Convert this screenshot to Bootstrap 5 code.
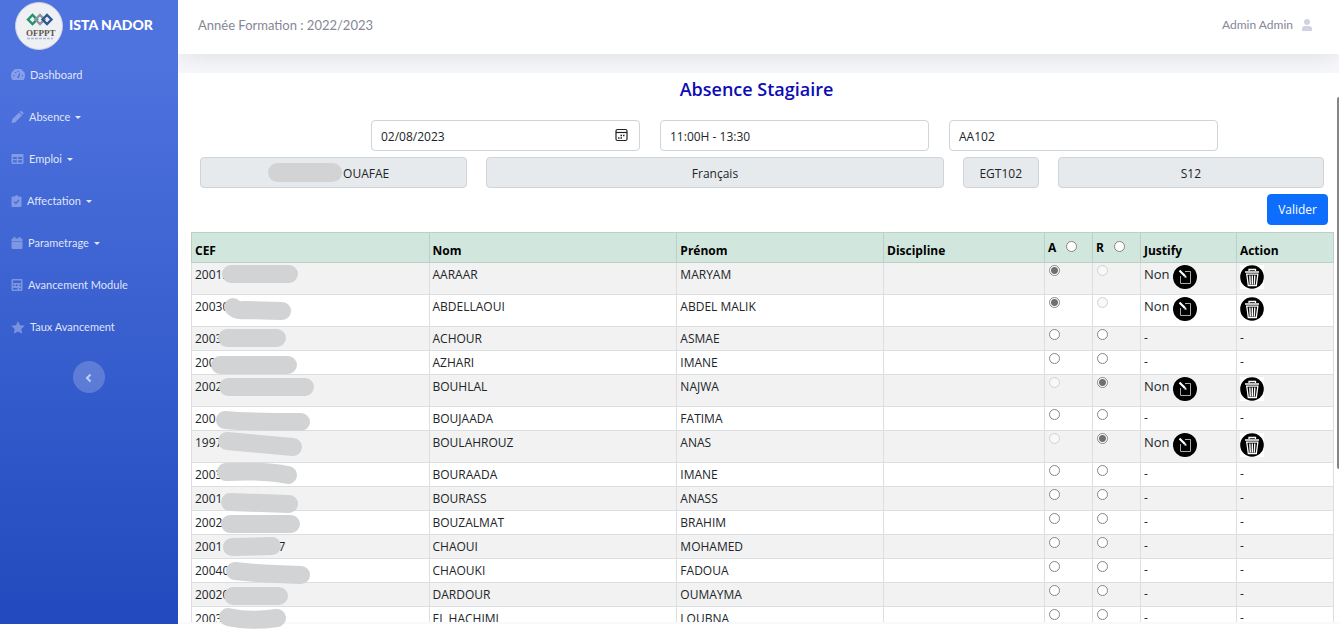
<!DOCTYPE html>
<html lang="fr">
<head>
<meta charset="utf-8">
<meta name="viewport" content="width=device-width, initial-scale=1">
<title>Absence Stagiaire</title>
<link href="https://cdn.jsdelivr.net/npm/bootstrap@5.3.0/dist/css/bootstrap.min.css" rel="stylesheet">
<style>
  body { min-height: 100vh; font-family: "Open Sans", sans-serif; font-size: 12px; line-height: 18px; color: #212529; background: #fff; overflow: hidden; }
  .app { height: calc(100vh - 6px); background: #f8f9fc; }
  .side { width: 178px; position: relative; z-index: 2; background: linear-gradient(180deg, #4e73df 10%, #224abe 100%); font-family: Lato, sans-serif; }
  .brand { height: 54px; padding: 0 0 2px 15px; gap: 6px; color: #fff; font-weight: 900; font-size: 14px; text-decoration: none; }
  .brand span { padding-bottom: 3px; }
  .side-item { height: 42px; padding-left: 11px; gap: 5px; color: rgba(255,255,255,.85); font-size: 11px; text-decoration: none; }
  .side-item svg { fill: rgba(255,255,255,.32); }
  .side-item.dropdown-toggle::after { margin-left: 0; border-width: 3px 3px 0; }
  .toggler { width: 32px; height: 32px; margin-top: 13px; background: rgba(255,255,255,.2); border: 0; }
  .topbar { height: 54px; padding: 0 27px 4px 20px; background: #fff; color: #858796; font-family: Lato, sans-serif; font-size: 13px; box-shadow: 0 2px 28px rgba(58,59,69,.15); }
  .topbar a { color: #858796; font-size: 12px; text-decoration: none; gap: 9px; }
  .panel { margin-top: 19px; margin-bottom: 2px; padding: 5px 5px 0 13px; background: #fff; min-height: 0; }
  .panel h1 { font-size: 18px; line-height: 22px; font-weight: 600; color: #0c0cb4; margin: 0 12px 20px 0; }
  .filters { display: grid; grid-template-columns: 160fr repeat(3, 269fr) 96fr; gap: 20px; margin-bottom: 6px; }
  .filters > :first-child { grid-column: 2; }
  .infos { display: grid; grid-template-columns: 267fr 457fr 76fr 266fr; gap: 19px; margin: 0 10px 6px 9px; }
  .form-control { height: 31px; padding: 6px 9px 4px; font-size: 12px; line-height: 18px; color: #212529; border-color: #ced4da; border-radius: 4px; }
  .form-control:disabled { background: #e7eaed; text-align: center; padding: 6px 0 4px; opacity: 1; }
  .masked:disabled { padding-left: 65px; }
  .mask { left: 68px; top: 6px; width: 74px; height: 19px; border-radius: 10px; background: #d1d3d5; }
  .cal { right: 12px; top: 8px; }
  .send { height: 31px; margin: 0 6px 7px 0; padding: 1px 10px 0; font-size: 12px; border-radius: 4px; }
  .list { table-layout: fixed; margin: 0; border-color: #dcdfe2; color: #212529; }
  .list > :not(caption) > * > * { padding: 3px 0 2px 3px; line-height: 18px; }
  .list > tbody > tr { height: 24px; }
  .list > tbody > tr.tall { height: 32px; }
  .list > thead th { height: 30px; vertical-align: bottom; font-weight: 700; color: #000; padding-bottom: 2px; }
  .list > thead th.pick { vertical-align: top; padding-top: 6px; }
  .list > tbody > tr > td { vertical-align: top; }
  .list > tbody > tr > td:nth-child(n+5) { padding-top: 2px; }
  .list input { appearance: none; display: block; width: 11px; height: 11px; margin: 0; border: 1px solid #858585; border-radius: 50%; background: #fff; }
  .list td input { margin-left: 1px; }
  .list th input { display: inline-block; margin-left: 7px; vertical-align: 0; }
  .list input:disabled { border-color: #d2d2d2; background: #f8f8f8; }
  .list input:checked { border-color: #8a8a8a; background: radial-gradient(circle, #707070 0 3px, #fff 4px); }
  .w-cef { width: 20.8%; } .w-nom { width: 21.7%; } .w-pre { width: 18.1%; } .w-dis { width: 14.1%; } .w-rad { width: 4.2%; } .w-jus { width: 8.4%; }
  .ico { border: 0; padding: 0; background: none; display: block; width: 24px; height: 24px; }
  .ico svg { display: block; }
  .just { gap: 3px; line-height: 18px; font-size: 13px; }
  .marks { left: 0; top: 0; pointer-events: none; overflow: visible; }
  .thumb { right: 0; top: 97px; width: 2px; height: 59vh; background: #858585; border-radius: 2px 0 0 2px; }
  .min0 { min-height: 0; min-width: 0; }
</style>
</head>
<body>
<svg width="0" height="0" class="position-absolute">
  <symbol id="edit" viewBox="0 0 24 24"><circle cx="12" cy="12" r="12"/><path d="M12 6.500H17.500V18.500H7.500V11" fill="none" stroke="#aaa" stroke-width="1"/><path d="M6.500 5.500L12 11" stroke="#fff" stroke-width="2.200"/><path d="M11 12.200L13.600 12.800L13 10.200Z" fill="#fff"/></symbol>
  <symbol id="bin" viewBox="0 0 24 24"><path fill="#fff" d="M0 0h24v24H0z"/><circle cx="12" cy="12" r="11.800"/><path d="M9 6V4.500h6.500V6M5 7h14M6 9.200h12.500M6.800 9.500l1.500 11h8l1.500-11" fill="none" stroke="#fff" stroke-width="1.300"/><path d="M9.800 10.500l.5 9M12.300 10.500v9M14.800 10.500l-.5 9" stroke="#fff" stroke-width="1.400"/></symbol>
</svg>
<div class="app d-flex">
  <nav class="side flex-shrink-0 d-flex flex-column">
    <a class="brand d-flex align-items-center" href="#">
      <svg width="48" height="48" viewBox="0 0 48 48" aria-hidden="true"><circle cx="24" cy="24" r="23.500" fill="#eef0f3" stroke="#c8cede"/>
        <g fill="none" stroke-width="2.400"><path d="M13 17.500l4.500-4.500 4.500 4.500-4.500 4.500z" stroke="#1f9468"/><path d="M20.500 17.500L25 13l4.500 4.500L25 22z" stroke="#8c96a0"/><path d="M27.500 17.500L32 13l4.500 4.500L32 22z" stroke="#2f5796"/></g>
        <text x="11" y="34" font-family="Liberation Serif, serif" font-weight="700" font-size="9" fill="#5c5450">OFPPT</text><path d="M12 36.500h26" stroke="#a9b9d4" stroke-width="1.500" stroke-dasharray="3 1"/></svg>
      <span>ISTA NADOR</span></a>
    <a class="side-item d-flex align-items-center" href="#"><svg width="14" height="12" viewBox="0 0 14 12"><path fill-rule="evenodd" d="M1.500 11A7 7 0 1 1 12.500 11zM6 9h2l1.200-5-.8-.3zM2 6h1.300v1.300H2zM4 3h1.300v1.300H4zM6.300 1.800h1.300v1.300H6.300zM10.700 6H12v1.300h-1.300z"/></svg><span>Dashboard</span></a>
    <a class="side-item dropdown-toggle d-flex align-items-center" href="#"><svg width="13" height="12" viewBox="0 0 12 12"><path d="M0 12l.8-3.800L7.500 1.500l3 3L3.800 11.200zM8.200.8L9 .2q.7-.5 1.300.1l1.400 1.400q.6.700 0 1.300l-.8.800z"/></svg><span>Absence</span></a>
    <a class="side-item dropdown-toggle d-flex align-items-center" href="#"><svg width="13" height="12" viewBox="0 0 12 12"><path fill-rule="evenodd" d="M1 1h10q1 0 1 1v8q0 1-1 1H1q-1 0-1-1V2q0-1 1-1zM1.500 4v2h3.800V4zM6.700 4v2h3.800V4zM1.500 7.300v2.200h3.800V7.300zM6.700 7.300v2.200h3.800V7.300z"/></svg><span>Emploi</span></a>
    <a class="side-item dropdown-toggle d-flex align-items-center" href="#"><svg width="11" height="12" viewBox="0 0 10 12"><path fill-rule="evenodd" d="M1 1.500h2.500a1.500 1.500 0 0 1 3 0H9q1 0 1 1V11q0 1-1 1H1q-1 0-1-1V2.500q0-1 1-1zM2.300 7l2 2.200L8 5.500l-.9-.9L4.300 7.400 3.200 6.200z"/></svg><span>Affectation</span></a>
    <a class="side-item dropdown-toggle d-flex align-items-center" href="#"><svg width="12" height="12" viewBox="0 0 11 12"><path d="M2 0h2v1.500h3V0h2v1.500h1q1 0 1 1V4H0V2.500q0-1 1-1h1zM0 4.500h11V11q0 1-1 1H1q-1 0-1-1z"/></svg><span>Parametrage</span></a>
    <a class="side-item d-flex align-items-center" href="#"><svg width="12" height="12" viewBox="0 0 11 12"><path fill-rule="evenodd" d="M1 0h9q1 0 1 1v10q0 1-1 1H1q-1 0-1-1V1q0-1 1-1zM1.500 1.500V4h8V1.500zM1.500 5.500V7H3V5.500zM4.500 5.500V7H6V5.500zM8 5.500V7h1.500V5.500zM1.500 9v1.500H6V9zM8 9v1.500h1.500V9z"/></svg><span>Avancement Module</span></a>
    <a class="side-item d-flex align-items-center" href="#"><svg width="14" height="13" viewBox="0 0 14 13"><path d="M7 0l2 4.200 4.700.6-3.400 3.300.9 4.700L7 10.600l-4.200 2.200.9-4.700L.3 4.800 5 4.200z"/></svg><span>Taux Avancement</span></a>
    <button class="toggler rounded-circle mx-auto p-0" type="button" aria-label="Réduire le menu"><svg width="8" height="10" viewBox="0 0 8 10"><path d="M5.500 1.500L2 5l3.500 3.500" fill="none" stroke="#c3cef2" stroke-width="2"/></svg></button>
  </nav>
  <div class="flex-grow-1 d-flex flex-column position-relative min0">
    <header class="topbar flex-shrink-0 d-flex justify-content-between align-items-center">
      <span>Année Formation : 2022/2023</span>
      <a class="d-flex align-items-center" href="#"><span>Admin Admin</span><svg width="10" height="12" viewBox="0 0 10 12" fill="#d1d3e2"><circle cx="5" cy="3" r="3"/><path d="M0 12v-2q0-3 3-3h4q3 0 3 3v2z"/></svg></a>
    </header>
    <main class="panel flex-grow-1 d-flex flex-column">
      <h1 class="text-center">Absence Stagiaire</h1>
      <div class="filters">
        <div class="position-relative"><input class="form-control" type="text" value="02/08/2023" aria-label="Date"><svg class="cal position-absolute" width="13" height="14" viewBox="0 0 13 14"><rect x="1" y="1.500" width="11" height="11" rx="1.500" fill="none" stroke="#222" stroke-width="1.200"/><path d="M1 4.500h11" stroke="#222" stroke-width="1.200"/><path d="M5.500 7.500h5M3 10h5" stroke="#222" stroke-width="1.500" stroke-dasharray="1.500 1"/></svg></div>
        <select class="form-control" aria-label="Séance"><option>11:00H - 13:30</option></select>
        <select class="form-control" aria-label="Groupe"><option>AA102</option></select>
      </div>
      <div class="infos">
        <div class="position-relative"><input class="form-control masked" disabled value="OUAFAE" aria-label="Formateur"><span class="mask position-absolute"></span></div>
        <input class="form-control" disabled value="Français" aria-label="Module">
        <input class="form-control" disabled value="EGT102" aria-label="Code">
        <input class="form-control" disabled value="S12" aria-label="Salle">
      </div>
      <button class="send btn btn-primary align-self-end flex-shrink-0" type="button">Valider</button>
      <div class="position-relative flex-grow-1 min0">
        <div class="h-100 overflow-hidden">
        <table class="list table table-bordered table-striped">
          <thead class="table-success"><tr><th class="w-cef">CEF</th><th class="w-nom">Nom</th><th class="w-pre">Prénom</th><th class="w-dis">Discipline</th><th class="w-rad pick"><label>A <input type="radio" name="all"></label></th><th class="w-rad pick"><label>R <input type="radio" name="all"></label></th><th class="w-jus">Justify</th><th>Action</th></tr></thead>
          <tbody>
            <tr class="tall"><td>20013</td><td>AARAAR</td><td>MARYAM</td><td></td><td><input type="radio" name="r1" aria-label="Absent" checked disabled></td><td><input type="radio" name="r1" aria-label="Retard" disabled></td><td><div class="just d-flex"><span>Non</span><button class="ico" type="button" aria-label="Justifier"><svg width="24" height="24"><use href="#edit"/></svg></button></div></td><td><button class="ico" type="button" aria-label="Supprimer"><svg width="24" height="24"><use href="#bin"/></svg></button></td></tr>
            <tr class="tall"><td>20030</td><td>ABDELLAOUI</td><td>ABDEL MALIK</td><td></td><td><input type="radio" name="r2" aria-label="Absent" checked disabled></td><td><input type="radio" name="r2" aria-label="Retard" disabled></td><td><div class="just d-flex"><span>Non</span><button class="ico" type="button" aria-label="Justifier"><svg width="24" height="24"><use href="#edit"/></svg></button></div></td><td><button class="ico" type="button" aria-label="Supprimer"><svg width="24" height="24"><use href="#bin"/></svg></button></td></tr>
            <tr><td>2003</td><td>ACHOUR</td><td>ASMAE</td><td></td><td><input type="radio" name="r3" aria-label="Absent"></td><td><input type="radio" name="r3" aria-label="Retard"></td><td>-</td><td>-</td></tr>
            <tr><td>200</td><td>AZHARI</td><td>IMANE</td><td></td><td><input type="radio" name="r4" aria-label="Absent"></td><td><input type="radio" name="r4" aria-label="Retard"></td><td>-</td><td>-</td></tr>
            <tr class="tall"><td>2002</td><td>BOUHLAL</td><td>NAJWA</td><td></td><td><input type="radio" name="r5" aria-label="Absent" disabled></td><td><input type="radio" name="r5" aria-label="Retard" checked disabled></td><td><div class="just d-flex"><span>Non</span><button class="ico" type="button" aria-label="Justifier"><svg width="24" height="24"><use href="#edit"/></svg></button></div></td><td><button class="ico" type="button" aria-label="Supprimer"><svg width="24" height="24"><use href="#bin"/></svg></button></td></tr>
            <tr><td>200</td><td>BOUJAADA</td><td>FATIMA</td><td></td><td><input type="radio" name="r6" aria-label="Absent"></td><td><input type="radio" name="r6" aria-label="Retard"></td><td>-</td><td>-</td></tr>
            <tr class="tall"><td>1997</td><td>BOULAHROUZ</td><td>ANAS</td><td></td><td><input type="radio" name="r7" aria-label="Absent" disabled></td><td><input type="radio" name="r7" aria-label="Retard" checked disabled></td><td><div class="just d-flex"><span>Non</span><button class="ico" type="button" aria-label="Justifier"><svg width="24" height="24"><use href="#edit"/></svg></button></div></td><td><button class="ico" type="button" aria-label="Supprimer"><svg width="24" height="24"><use href="#bin"/></svg></button></td></tr>
            <tr><td>2003</td><td>BOURAADA</td><td>IMANE</td><td></td><td><input type="radio" name="r8" aria-label="Absent"></td><td><input type="radio" name="r8" aria-label="Retard"></td><td>-</td><td>-</td></tr>
            <tr><td>2001</td><td>BOURASS</td><td>ANASS</td><td></td><td><input type="radio" name="r9" aria-label="Absent"></td><td><input type="radio" name="r9" aria-label="Retard"></td><td>-</td><td>-</td></tr>
            <tr><td>2002</td><td>BOUZALMAT</td><td>BRAHIM</td><td></td><td><input type="radio" name="r10" aria-label="Absent"></td><td><input type="radio" name="r10" aria-label="Retard"></td><td>-</td><td>-</td></tr>
            <tr><td>2001<span class="ps-5 ms-2">7</span></td><td>CHAOUI</td><td>MOHAMED</td><td></td><td><input type="radio" name="r11" aria-label="Absent"></td><td><input type="radio" name="r11" aria-label="Retard"></td><td>-</td><td>-</td></tr>
            <tr><td>20040</td><td>CHAOUKI</td><td>FADOUA</td><td></td><td><input type="radio" name="r12" aria-label="Absent"></td><td><input type="radio" name="r12" aria-label="Retard"></td><td>-</td><td>-</td></tr>
            <tr><td>20020</td><td>DARDOUR</td><td>OUMAYMA</td><td></td><td><input type="radio" name="r13" aria-label="Absent"></td><td><input type="radio" name="r13" aria-label="Retard"></td><td>-</td><td>-</td></tr>
            <tr><td>2003</td><td>EL HACHIMI</td><td>LOUBNA</td><td></td><td><input type="radio" name="r14" aria-label="Absent"></td><td><input type="radio" name="r14" aria-label="Retard"></td><td>-</td><td>-</td></tr>
          </tbody>
        </table>
        </div>
        <!-- strokes hiding the private part of each CEF -->
        <svg class="marks position-absolute" width="140" height="390" viewBox="191 232 140 390" fill="none" stroke="#d1d3d5" stroke-width="18" stroke-linecap="round" stroke-linejoin="round">
          <path d="M231 274H289M233 307Q237 311 244 310L282 311M227 338H277M220 365H288M228 387H305M225 420Q245 422 301 422M227 441L293 447M226 472Q262 470 288 475M230 502L289 504M230 524H291M232 547L272 546M235 571Q260 574 301 575M233 596H279M228 617Q250 622 277 618"/>
        </svg>
      </div>
    </main>
    <span class="thumb position-absolute"></span>
  </div>
</div>
<script src="https://cdn.jsdelivr.net/npm/bootstrap@5.3.0/dist/js/bootstrap.bundle.min.js"></script>
</body>
</html>
